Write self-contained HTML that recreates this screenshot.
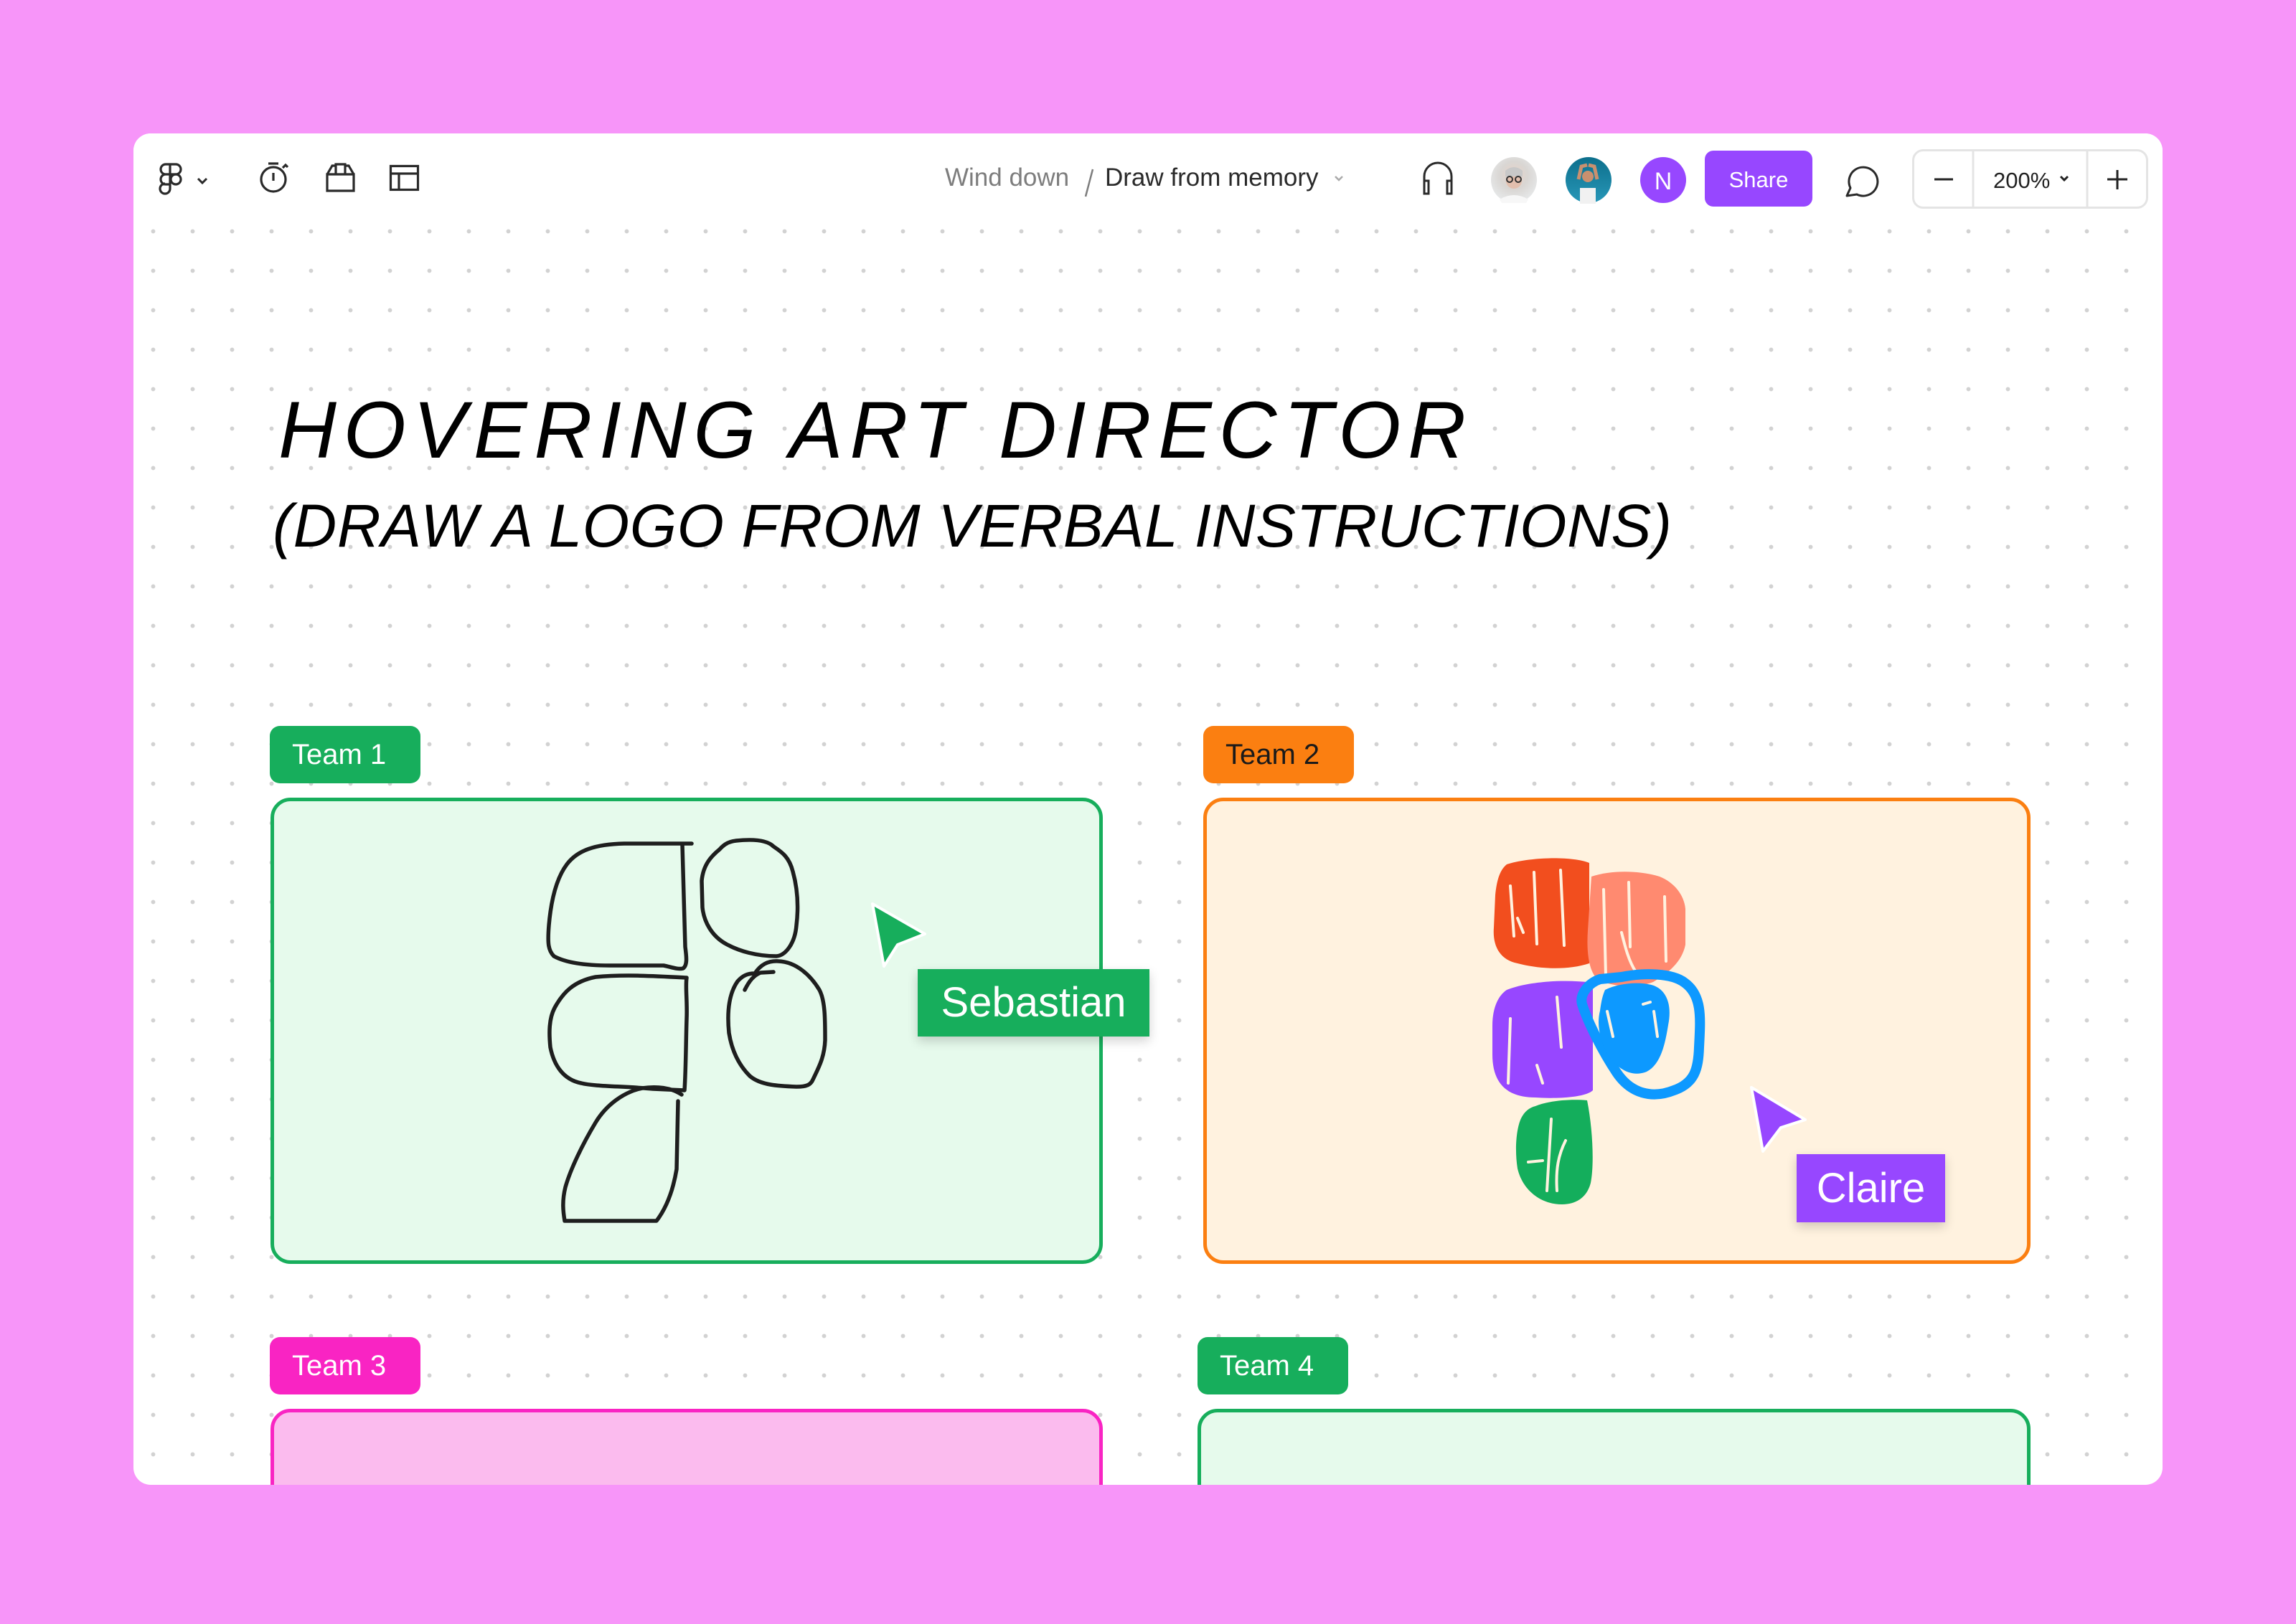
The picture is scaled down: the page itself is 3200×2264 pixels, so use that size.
<!DOCTYPE html>
<html><head><meta charset="utf-8">
<style>
html,body{margin:0;padding:0;}
body{width:3200px;height:2264px;background:#f795f9;position:relative;overflow:hidden;font-family:"Liberation Sans",sans-serif;}
#win{position:absolute;left:186px;top:186px;width:2828px;height:1884px;background:#fff;border-radius:24px;overflow:hidden;
background-image:radial-gradient(circle,#d2d2d2 2.6px,transparent 3.2px);background-size:55px 55px;background-position:-165px -166px;}
#bar{position:absolute;left:0;top:0;width:2828px;height:120px;background:#fff;}
.abs{position:absolute;}
.lbl{position:absolute;height:80px;border-radius:14px;color:#fff;font-size:40px;line-height:80px;padding-left:31px;box-sizing:border-box;}
.box{position:absolute;border:5px solid;border-radius:28px;box-sizing:border-box;}
.name{position:absolute;color:#fff;font-size:58px;box-shadow:0 6px 14px rgba(0,0,0,.18);text-align:center;box-sizing:border-box;}
</style></head><body>
<div id="win">
<div id="bar"></div>
</div>

<svg class="abs" style="left:0;top:0" width="3200" height="2264" viewBox="0 0 3200 2264">
 <g fill="none" stroke="#2a2a2a" stroke-width="3.2">
  <path d="M237 229h8a7 7 0 0 1 0 14h-8zM237 229h-6a7 7 0 0 0 0 14h6zM237 243v14h-6a7 7 0 0 1 0-14zM237 257v6a7 7 0 1 1-7-7"/>
  <circle cx="245" cy="250" r="7"/>
  <path d="M276 249l6 6 6-6" stroke-width="3"/>
  <circle cx="381" cy="250" r="17"/><path d="M381 241v11M374 228h14M394 234l4-4 3 3"/>
  <path d="M468 229h13v14h-13zM456 243h37v23h-37zM456 243l7-12h5M481 231h5l7 12"/>
  <rect x="544.5" y="231.5" width="38" height="33"/><path d="M545 242h38M556 242v23"/>
 </g>
 <text x="1317" y="259" font-size="35" fill="#7d7d7d">Wind down</text>
 <path d="M1523 236l-10 38" stroke="#7d7d7d" stroke-width="2.5"/>
 <text x="1540" y="259" font-size="35" fill="#2a2a2a">Draw from memory</text>
 <path d="M1861 246l5 5 5-5" fill="none" stroke="#aaa" stroke-width="2.5"/>
 <path d="M1985 266v-20a19 19 0 0 1 38 0v20M1985 252h6v18h-6zM2017 252h6v18h-6z" fill="none" stroke="#2a2a2a" stroke-width="3"/>
 <defs>
  <radialGradient id="a1" cx="50%" cy="40%" r="60%"><stop offset="0" stop-color="#e9d2c6"/><stop offset="0.5" stop-color="#d9d6d3"/><stop offset="1" stop-color="#e7e9ea"/></radialGradient>
  <linearGradient id="a2" x1="0" y1="0" x2="0" y2="1"><stop offset="0" stop-color="#0d6f8c"/><stop offset="1" stop-color="#2797b8"/></linearGradient>
 </defs>
 <circle cx="2110" cy="251" r="32" fill="url(#a1)"/>
 <path d="M2090 278q20-12 40 0l-3 5h-34z" fill="#f7f7f7"/>
 <circle cx="2110" cy="252" r="11" fill="#e2bfae"/>
 <path d="M2098 238q12-10 24 0v8h-24z" fill="#c8c8c8"/>
 <circle cx="2104" cy="250" r="4" fill="none" stroke="#333" stroke-width="2"/><circle cx="2116" cy="250" r="4" fill="none" stroke="#333" stroke-width="2"/>
 <circle cx="2214" cy="251" r="32" fill="url(#a2)"/>
 <path d="M2202 262h22v22h-22z" fill="#f1f1f1"/><circle cx="2213" cy="246" r="8" fill="#c9906f"/>
 <path d="M2200 250l4-18 8-2M2226 250l-4-18-8-2" stroke="#c9906f" stroke-width="5" fill="none"/>
 <circle cx="2318" cy="251" r="32" fill="#9747ff"/>
 <text x="2318" y="264" font-size="34" fill="#fff" text-anchor="middle">N</text>
 <rect x="2376" y="210" width="150" height="78" rx="12" fill="#9747ff"/>
 <text x="2451" y="261" font-size="31" fill="#fff" text-anchor="middle">Share</text>
 <path d="M2574 273l5-11a20 20 0 1 1 9 9z" fill="none" stroke="#2a2a2a" stroke-width="3" stroke-linejoin="round"/>
 <rect x="2666.5" y="209.5" width="326" height="80" rx="14" fill="#fff" stroke="#e4e4e4" stroke-width="3"/>
 <path d="M2750 210v80M2909 210v80" stroke="#e4e4e4" stroke-width="3"/>
 <path d="M2696 250h26M2937 250h28M2951 237v27" stroke="#222" stroke-width="3"/>
 <text x="2778" y="262" font-size="31" fill="#222">200%</text>
 <path d="M2872 246l5 5 5-5" fill="none" stroke="#222" stroke-width="3"/>

 <text x="388" y="638" font-size="112" font-style="italic" textLength="1655" lengthAdjust="spacing" fill="#000">HOVERING ART DIRECTOR</text>
 <text x="380" y="762" font-size="84" font-style="italic" textLength="1950" lengthAdjust="spacing" fill="#000">(DRAW A LOGO FROM VERBAL INSTRUCTIONS)</text>
</svg>

<div class="lbl" style="left:376px;top:1012px;width:210px;background:#17ae5c">Team 1</div>
<div class="box" style="left:377px;top:1112px;width:1160px;height:650px;border-color:#17ae5c;background:#e6faec"></div>
<div class="lbl" style="left:1677px;top:1012px;width:210px;background:#fb7f11;color:#1a1a1a">Team 2</div>
<div class="box" style="left:1677px;top:1112px;width:1153px;height:650px;border-color:#fb7f11;background:#fff2df"></div>
<div class="lbl" style="left:376px;top:1864px;width:210px;background:#f924c3">Team 3</div>
<div class="box" style="left:377px;top:1964px;width:1160px;height:300px;border-color:#f924c3;background:#fbbbee"></div>
<div class="lbl" style="left:1669px;top:1864px;width:210px;background:#17ae5c">Team 4</div>
<div class="box" style="left:1669px;top:1964px;width:1161px;height:300px;border-color:#17ae5c;background:#e6faec"></div>
<div class="abs" style="left:0;top:2070px;width:3200px;height:194px;background:#f795f9"></div>

<svg class="abs" style="left:0;top:0" width="3200" height="2264" viewBox="0 0 3200 2264">
 <g fill="none" stroke="#1e1e1e" stroke-width="5.5" stroke-linecap="round" stroke-linejoin="round">
  <path d="M964 1176H870C830 1177 805 1185 790 1205C775 1225 768 1255 765 1290C763 1315 764 1325 772 1333C790 1343 820 1346 850 1346H925C935 1348 945 1352 952 1350C958 1346 957 1335 955 1320L951 1178"/>
  <path d="M1026 1172C1045 1170 1068 1170 1078 1180C1090 1188 1100 1195 1105 1215C1112 1240 1113 1265 1110 1290C1108 1315 1095 1332 1082 1333C1055 1333 1030 1326 1012 1316C992 1305 981 1285 979 1265L978 1228C980 1205 992 1193 1003 1184C1010 1176 1017 1173 1026 1172Z"/>
  <path d="M957 1363C920 1361 870 1358 830 1362C800 1368 785 1383 773 1405C765 1420 765 1440 767 1460C772 1485 785 1505 810 1510C830 1515 870 1514 910 1518L954 1520C956 1490 956 1450 957 1420C958 1395 955 1375 957 1363Z"/>
  <path d="M1052 1357C1060 1345 1070 1339 1085 1340C1110 1341 1130 1360 1142 1380C1150 1395 1150 1420 1150 1450C1149 1475 1140 1490 1133 1505C1130 1512 1125 1515 1110 1515C1085 1514 1060 1513 1045 1500C1030 1485 1020 1465 1016 1440C1013 1410 1016 1385 1028 1368C1035 1360 1042 1357 1052 1357ZM1038 1380C1044 1368 1050 1360 1060 1356L1078 1355"/>
  <path d="M950 1526C935 1516 915 1514 895 1517C870 1522 845 1540 830 1565C812 1595 795 1630 788 1655C783 1675 785 1690 787 1702H915C928 1685 938 1660 943 1630L945 1535"/>
 </g>
 <path d="M1216 1260l73 42-38 15-19 30z" fill="#17ae5c" stroke="#fff" stroke-width="4" stroke-linejoin="round"/>

 <g stroke-linecap="round" stroke-linejoin="round">
  <path d="M2100 1205c30-10 90-12 115 -2v140c-30 10-70 8-100 0-25-5-35-25-33-50l2-45c2-20 6-35 16-43z" fill="#f24e1e"/>
  <path d="M2105 1235l5 70M2138 1216l4 100M2175 1213l5 105M2123 1300l-8-20" stroke="#fff2df" stroke-width="4" fill="none"/>
  <path d="M2218 1222c30-10 70-8 95 0 20 8 34 25 36 45v50c-5 25-25 40-45 52-20 8-50 8-75-2-15-10-18-40-16-70z" fill="#ff8a70"/>
  <path d="M2235 1240l3 120M2270 1230l2 90M2260 1300c5 20 10 40 20 55M2320 1250l2 90" stroke="#fff2df" stroke-width="4" fill="none"/>
  <path d="M2100 1380c30-12 80-15 120-10v150c-10 10-50 12-80 10-40 0-60-20-60-60v-40c0-25 8-42 20-50z" fill="#9747ff"/>
  <path d="M2105 1420l-3 90M2170 1390l6 70M2150 1510l-8-25" stroke="#fff2df" stroke-width="4" fill="none"/>
  <path d="M2260 1362c30-6 70-6 88 8 25 18 22 50 20 90-1 30-6 50-35 60-30 12-60 5-80-25-20-30-40-70-48-95-4-15 10-30 25-35z" fill="none" stroke="#0d99ff" stroke-width="14"/>
  <path d="M2237 1380c20-10 50-12 68-6 20 8 25 30 20 55-4 25-10 55-30 65-20 8-40-2-55-25-10-20-15-40-10-60 2-15 4-22 7-29z" fill="#0d99ff"/>
  <path d="M2240 1410l8 35M2305 1410l5 35M2290 1400l10-3" stroke="#fff2df" stroke-width="4" fill="none"/>
  <path d="M2140 1542c20-8 50-10 72-8 8 40 10 90 5 115-5 20-20 30-40 30-30 0-55-20-62-50-4-25-2-55 5-70 5-10 12-15 20-17z" fill="#14ae5c"/>
  <path d="M2162 1560l-6 100M2182 1590c-10 20-14 40-12 70M2130 1620l20-2" stroke="#fff2df" stroke-width="4" fill="none"/>
 </g>
 <path d="M2441 1516l75 45-34 11-25 33z" fill="#9747ff" stroke="#fff" stroke-width="4" stroke-linejoin="round"/>
</svg>

<div class="name" style="left:1279px;top:1351px;width:323px;height:94px;line-height:94px;background:#17ae5c">Sebastian</div>
<div class="name" style="left:2504px;top:1609px;width:207px;height:95px;line-height:95px;background:#9747ff">Claire</div>
</body></html>
